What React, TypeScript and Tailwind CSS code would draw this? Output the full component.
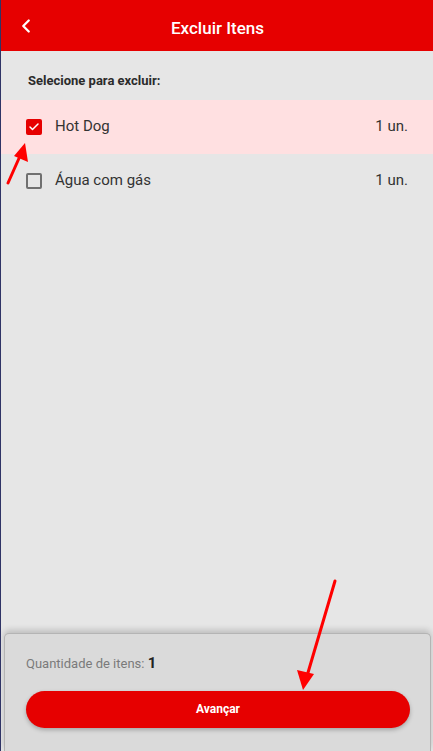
import { ChevronLeft, Check } from 'lucide-react';

type Item = {
  name: string;
  qty: string;
  checked: boolean;
};

const items: Item[] = [
  { name: 'Hot Dog', qty: '1 un.', checked: true },
  { name: 'Água com gás', qty: '1 un.', checked: false },
];

function Box({ checked }: { checked: boolean }) {
  if (checked) {
    return (
      <span className="grid h-[16px] w-[16px] place-items-center rounded-[2px] bg-[#e60000]">
        <Check className="h-[12px] w-[12px] text-white" strokeWidth={3} />
      </span>
    );
  }
  return <span className="h-[16px] w-[16px] rounded-[2px] border-2 border-[#707070]" />;
}

export default function App() {
  return (
    <div className="relative flex h-[751px] w-[433px] flex-col overflow-hidden border-l border-[#2f3466] bg-[#e6e6e6] font-['Roboto',sans-serif]">
      {/* Header */}
      <header className="relative flex h-[51px] shrink-0 items-center justify-center bg-[#e60000]">
        <ChevronLeft className="absolute left-[14px] top-[15px] h-[22px] w-[22px] text-white" strokeWidth={2.5} />
        <h1 className="pl-[1px] pt-[7px] text-[17px] font-medium text-white">Excluir Itens</h1>
      </header>

      {/* List */}
      <div className="flex-1">
        <p className="px-[27px] pt-[20px] pb-[9px] text-[13px] font-bold text-[#2b2b2b]">Selecione para excluir:</p>
        {items.map((it) => (
          <div
            key={it.name}
            className={`flex h-[54px] items-center pl-[25px] pr-[25px] ${it.checked ? 'bg-[#ffe0e1]' : ''}`}
          >
            <Box checked={it.checked} />
            <span className="ml-[13px] flex-1 text-[15px] text-[#333]">{it.name}</span>
            <span className="text-[15px] text-[#333]">{it.qty}</span>
          </div>
        ))}
      </div>

      {/* Footer panel */}
      <div className="ml-[3px] mr-[2px] h-[118px] shrink-0 rounded-t-[5px] border border-b-0 border-[#b4b4b4] bg-[#dadada] px-[21px] pt-[18px] shadow-[0_-3px_6px_rgba(0,0,0,0.18)]">
        <p className="text-[13px] text-[#7a7a7a]">
          Quantidade de itens: <span className="text-[15px] font-bold text-[#222]">1</span>
        </p>
        <button className="mt-[16px] flex h-[37px] w-[384px] items-center justify-center rounded-full bg-[#e60000] text-[12px] font-bold text-white shadow-[0_2px_4px_rgba(0,0,0,0.25)]">
          Avançar
        </button>
      </div>

      {/* Annotation arrows */}
      <svg className="pointer-events-none absolute left-0 top-0" width="433" height="751" viewBox="0 0 433 751">
        <line x1="7" y1="183" x2="19" y2="156" stroke="#f00" strokeWidth="3" strokeLinecap="round" />
        <polygon points="24,143 27,162 13,156" fill="#f00" />
        <line x1="334" y1="581" x2="306" y2="676" stroke="#f00" strokeWidth="3" strokeLinecap="round" />
        <polygon points="302,690 296,670 313,674" fill="#f00" />
      </svg>
    </div>
  );
}
